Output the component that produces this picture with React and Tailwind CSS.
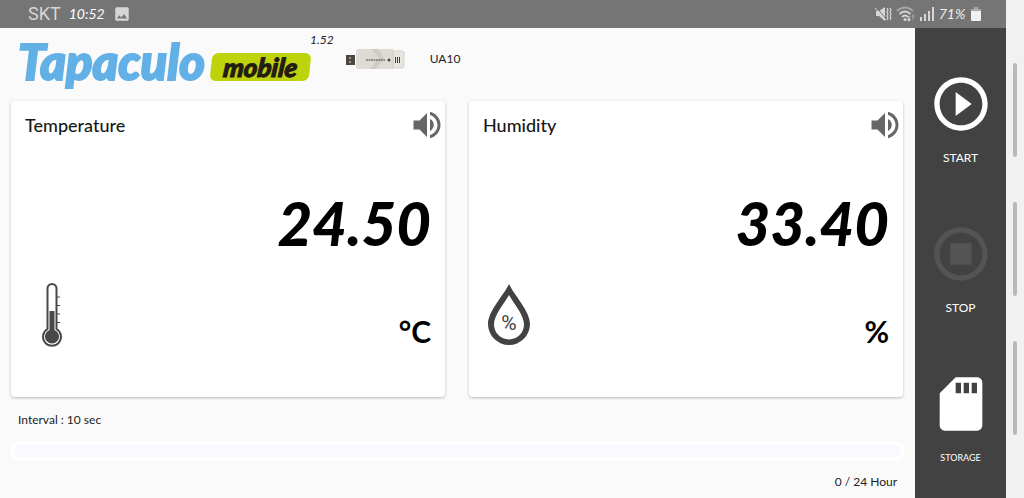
import React from "react";
import {
  MdVolumeUp,
  MdPlayCircleOutline,
  MdOutlineStopCircle,
  MdSdStorage,
  MdImage,
} from "react-icons/md";

function StatusBar() {
  return (
    <div className="flex h-7 items-center justify-between bg-[#757575] pr-6 pl-7 text-[#d6d6d6]">
      <div className="flex items-center gap-2">
        <span className="font-['Roboto',sans-serif] text-lg">SKT</span>
        <span className="text-sm text-white italic">10:52</span>
        <MdImage className="h-[18px] w-[18px]" />
      </div>
      <div className="flex items-center gap-1">
        <svg viewBox="0 0 18 18" className="h-[18px] w-[18px]" fill="currentColor">
          <path d="M2 6h3l6-4v14l-6-5H2z" />
          <path d="M2 2l10 12" stroke="#757575" strokeWidth="1" />
          <path d="M1 3l11 12" stroke="currentColor" strokeWidth="1" />
          <path d="M13 3l1 2-1 2 1 2-1 2 1 2-1 2M16 3l1 2-1 2 1 2-1 2 1 2-1 2" fill="none" stroke="currentColor" strokeWidth="1.200" />
        </svg>
        <svg viewBox="0 0 20 18" className="h-[18px] w-5" fill="none" stroke="currentColor" strokeWidth="1.800">
          <path d="M1 6q8-7 16 0" opacity=".5" />
          <path d="M3.500 9q5.500-5 11 0M6 12q3-3 6 0" />
          <circle cx="9" cy="14.500" r="1.500" fill="currentColor" stroke="none" />
          <path d="M13 11v5M11.500 14l1.500 2 1.500-2" strokeWidth="1.200" />
          <path d="M17 15v-5M15.500 12l1.500-2 1.500 2" strokeWidth="1.200" opacity=".4" />
        </svg>
        <svg viewBox="0 0 14 14" className="h-3.5 w-3.5" fill="currentColor">
          <path d="M0 10h2v4H0zM4 7h2v7H4zM8 4h2v10H8zM12 0h2v14h-2z" />
        </svg>
        <span className="w-7 text-center text-sm text-[#eeeeee] italic">71%</span>
        <svg viewBox="0 0 12 16" className="h-4 w-3">
          <path d="M4 1h4v2H4zM1 3h10v3H1z" fill="#aaaaaa" />
          <path d="M1 5h10v9q0 1-1 1H2q-1 0-1-1z" fill="#f0f0f0" />
        </svg>
      </div>
    </div>
  );
}

function UsbStick() {
  return (
    <svg viewBox="0 0 60 24" className="h-6 w-[60px]" role="img" aria-label="USB logger">
      <path d="M0 8h9v10H0z" fill="#4b4740" />
      <path d="M3 10h2v2H3zM3 14h2v2H3z" fill="#9b968d" />
      <path d="M12 2q-2 0-2 2v16q0 2 2 2h34q2 0 2-2V4q0-2-2-2z" fill="#dedbd4" />
      <path d="M25 2l8 9-9 11h6l8-11-6-9z" fill="#d0ccc5" />
      <path d="M47 4h9q2 0 2 2v13q0 2-2 2h-9z" fill="#e8e5df" stroke="#c9c5be" strokeWidth=".7" />
      <path d="M20 13h19" stroke="#77736c" strokeWidth="1.500" strokeDasharray="2 .5" />
      <circle cx="43" cy="13" r="1.500" fill="#4b4740" />
      <path d="M49 10h1v6h-1zM51 10h1v6h-1zM53 10h1v6h-1z" fill="#45403a" />
    </svg>
  );
}

function Header() {
  return (
    <header className="flex h-[73px] pl-[18px]">
      <div className="flex h-[66px] items-center">
        <span className="w-[193px] font-['Lato',sans-serif] text-[49px] leading-[64px] font-black text-[#62b0e6] italic [-webkit-text-stroke:2px_#62b0e6]">
          Tapaculo
        </span>
        <span className="mt-3 flex h-7 w-[99px] -skew-x-6 items-center justify-center rounded-md bg-[#bfd30b]">
          <span className="font-['Lato',sans-serif] text-[26px] leading-7 font-black text-[#221c14] italic [-webkit-text-stroke:1px_#221c14]">
            mobile
          </span>
        </span>
      </div>
      <span className="pt-1 text-xs italic">1.52</span>
      <div className="flex h-[62px] items-center gap-6 pl-3">
        <UsbStick />
        <span className="text-xs">UA10</span>
      </div>
    </header>
  );
}

function Thermometer() {
  return (
    <svg viewBox="0 0 28 66" className="h-[66px] w-7" role="img" aria-label="Thermometer">
      <path d="M6.500 47V6.500a4.500 4.500 0 0 1 9 0V47a9 9 0 1 1-9 0z" fill="#ffffff" stroke="#484848" strokeWidth="2" />
      <path d="M8.500 29h5v19a7 7 0 1 1-5 0z" fill="#484848" />
      <path d="M16 15h3M16 23.500h3M16 32h3M16 40.500h3" stroke="#484848" strokeWidth="1.200" />
    </svg>
  );
}

function Drop() {
  return (
    <svg viewBox="0 0 44 62" className="h-[62px] w-11" role="img" aria-label="Water drop">
      <path d="M22 0C17 11 1 27 1 40a21 21 0 0 0 42 0C43 27 27 11 22 0z" fill="#424242" />
      <path d="M22 11C17 20 7 31 7 40.500a15 15 0 0 0 30 0C37 31 27 20 22 11z" fill="#ffffff" />
      <text x="22" y="46" textAnchor="middle" fontFamily="Roboto, sans-serif" fontSize="21" fill="#424242">%</text>
    </svg>
  );
}

function Reading({ title, value, unit, icon }) {
  return (
    <section className="flex h-[296px] flex-1 flex-col rounded-sm bg-white pl-3.5 shadow-[0_1px_3px_rgba(0,0,0,0.25)]">
      <div className="flex h-12 items-center justify-between">
        <h2 className="text-lg font-medium text-[#171717]">{title}</h2>
        <button type="button" aria-label={`${title} sound`} className="text-[#666666]">
          <MdVolumeUp className="h-9 w-9" />
        </button>
      </div>
      <p className="flex h-[132px] items-center justify-end pt-4 pr-3.5 text-6xl font-black text-black italic">{value}</p>
      <div className="flex h-[68px] items-center justify-between pr-3.5 pl-1">
        {icon}
        <span className="pt-8 text-3xl leading-9 font-bold text-black">{unit}</span>
      </div>
    </section>
  );
}

function Action({ label, Icon, disabled, small }) {
  return (
    <button
      type="button"
      disabled={disabled}
      className="flex h-[106px] flex-col items-center gap-2.5 text-white"
    >
      <Icon className={disabled ? "h-16 w-16 text-[#545454]" : "h-16 w-16"} />
      <span className={small ? "text-[9px] leading-6" : "text-xs leading-6"}>{label}</span>
    </button>
  );
}

export default function App() {
  return (
    <div className="flex min-h-screen bg-[#f1f1f1] font-['Lato',sans-serif] text-[#222222]">
      <div className="flex min-w-0 flex-1 flex-col">
        <StatusBar />
        <div className="flex flex-1">
          <main className="flex min-w-0 flex-1 flex-col bg-[#fafafa]">
            <Header />
            <div className="flex gap-6 pr-3 pl-[11px]">
              <Reading title="Temperature" value="24.50" unit="°C" icon={<span className="pl-3"><Thermometer /></span>} />
              <Reading title="Humidity" value="33.40" unit="%" icon={<Drop />} />
            </div>
            <p className="px-[18px] pt-3.5 text-xs leading-[18px]">Interval : 10 sec</p>
            <div className="px-2.5 pt-3">
              <div
                role="progressbar"
                aria-label="Recording progress"
                aria-valuemin={0}
                aria-valuemax={24}
                aria-valuenow={0}
                className="h-5 rounded-full border-4 border-white bg-[#f9f9ff]"
              />
            </div>
            <p className="pt-3 pr-[18px] text-right text-xs leading-[18px]">0 / 24 Hour</p>
          </main>
          <nav className="flex w-[91px] flex-col items-center gap-11 bg-[#424242] pt-11">
            <Action label="START" Icon={MdPlayCircleOutline} />
            <Action label="STOP" Icon={MdOutlineStopCircle} disabled />
            <Action label="STORAGE" Icon={MdSdStorage} small />
          </nav>
        </div>
      </div>
      <div className="flex w-[18px] flex-col items-center gap-[45px] pt-[63px]">
        <span className="h-[94px] w-1 rounded-full bg-[#b8b8b8]" />
        <span className="h-[94px] w-1 rounded-full bg-[#b8b8b8]" />
        <span className="h-[94px] w-1 rounded-full bg-[#b8b8b8]" />
      </div>
    </div>
  );
}
